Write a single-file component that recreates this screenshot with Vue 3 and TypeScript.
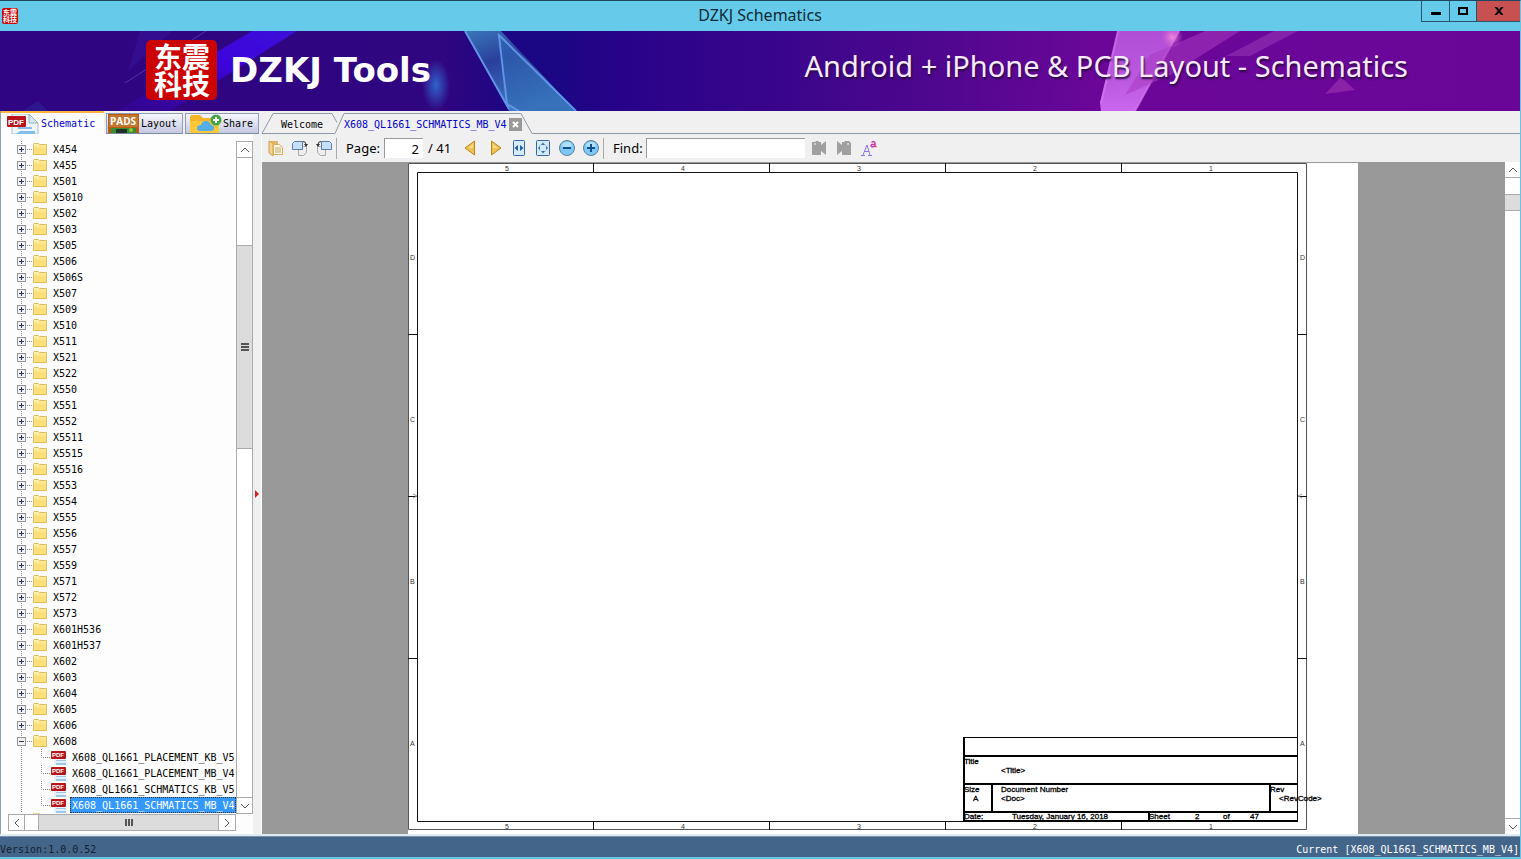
<script setup lang="ts">
import { ref } from 'vue'

const folders: string[] = [
  'X454', 'X455', 'X501', 'X5010', 'X502', 'X503', 'X505', 'X506', 'X506S', 'X507',
  'X509', 'X510', 'X511', 'X521', 'X522', 'X550', 'X551', 'X552', 'X5511', 'X5515',
  'X5516', 'X553', 'X554', 'X555', 'X556', 'X557', 'X559', 'X571', 'X572', 'X573',
  'X601H536', 'X601H537', 'X602', 'X603', 'X604', 'X605', 'X606', 'X608',
]
const openFolder = ref('X608')
const files: string[] = [
  'X608_QL1661_PLACEMENT_KB_V5',
  'X608_QL1661_PLACEMENT_MB_V4',
  'X608_QL1661_SCHMATICS_KB_V5',
  'X608_QL1661_SCHMATICS_MB_V4',
]
const selected = ref('X608_QL1661_SCHMATICS_MB_V4')
const pageNo = ref('2')
const findText = ref('')
const columns = [
  { label: '5', x: 97 }, { label: '4', x: 273 }, { label: '3', x: 449 },
  { label: '2', x: 625 }, { label: '1', x: 801 },
]
const rows = [
  { label: 'D', y: 97 }, { label: 'C', y: 259 }, { label: 'B', y: 421 }, { label: 'A', y: 583 },
]
</script>

<template>
  <div class="window">
    <header class="titlebar">
      <span class="seal seal-small" aria-hidden="true">东震科技</span>
      <h1>DZKJ Schematics</h1>
      <div class="win-buttons">
        <button class="min" aria-label="Minimize"><svg width="12" height="12"><path d="M1 7h10v3H1z" /></svg></button>
        <button class="max" aria-label="Maximize"><svg width="12" height="12"><path fill-rule="evenodd" d="M1 2h10v8H1zM3 4v4h6V4z" /></svg></button>
        <button class="close" aria-label="Close"><svg width="12" height="12"><path d="M1.500 2H4l2 2.500L8 2h2.500L7.300 6l3.200 4H8L6 7.500 4 10H1.500l3.200-4z" /></svg></button>
      </div>
    </header>

    <div class="banner">
      <svg class="banner-art" viewBox="0 0 1520 80" preserveAspectRatio="none" aria-hidden="true">
        <defs>
          <linearGradient id="bg" x1="0" x2="1">
            <stop offset="0" stop-color="#300583" /><stop offset="0.29" stop-color="#300580" />
            <stop offset="0.34" stop-color="#1b0783" /><stop offset="0.37" stop-color="#1b0783" />
            <stop offset="0.41" stop-color="#28038a" /><stop offset="0.5" stop-color="#37058a" />
            <stop offset="0.6" stop-color="#4b078e" /><stop offset="0.69" stop-color="#620795" />
            <stop offset="0.72" stop-color="#6b0699" /><stop offset="1" stop-color="#690698" />
          </linearGradient>
          <linearGradient id="beam" x1="1" y1="0" x2="0" y2="1">
            <stop offset="0" stop-color="#3d0fd8" /><stop offset="0.4" stop-color="#3c04dc" />
            <stop offset="1" stop-color="#3a06aa" stop-opacity="0.3" />
          </linearGradient>
          <linearGradient id="shard" x1="0" y1="0" x2="0.5" y2="1">
            <stop offset="0" stop-color="#3a78b8" /><stop offset="0.4" stop-color="#2a3f9c" />
            <stop offset="1" stop-color="#3f7fc4" />
          </linearGradient>
          <linearGradient id="pink" x1="0" y1="0" x2="0" y2="1">
            <stop offset="0" stop-color="#b04fd6" /><stop offset="0.6" stop-color="#bb58e0" />
            <stop offset="1" stop-color="#c968ee" />
          </linearGradient>
          <radialGradient id="glow"><stop offset="0" stop-color="#2f63c8" /><stop offset="1" stop-color="#2f63c8" stop-opacity="0" /></radialGradient>
          <radialGradient id="flare"><stop offset="0" stop-color="#f088dc" /><stop offset="1" stop-color="#d860d0" stop-opacity="0" /></radialGradient>
        </defs>
        <rect width="1520" height="80" fill="url(#bg)" />
        <path d="M140 0h32L128 40z" fill="#38149a" opacity="0.5" />
        <path d="M206 0 125 52" stroke="#5d49b5" opacity="0.7" />
        <path d="M252 0h45L170 80h-52z" fill="url(#beam)" />
        <path d="M38 70l10 10H22z" fill="#2a2a99" opacity="0.5" />
        <ellipse cx="436" cy="54" rx="14" ry="26" fill="url(#glow)" />
        <path d="M465 0h36l75 80H509z" fill="url(#shard)" />
        <path d="M500 5l8 65 10 10h58z" fill="#3168b4" opacity="0.6" />
        <path d="M465 0 509 78M498 3 576 80M499 5l8 68 12 7" fill="none" stroke="#6193e6" stroke-width="2" />
        <path d="M1118 0h61l-44 80h-34l-1-8z" fill="url(#pink)" />
        <path d="M1118 0 1101 72M1179 0l-44 80" stroke="#d47bee" stroke-width="2" opacity="0.7" />
        <path d="M1205 0h35l-70 44-45 20 25-40z" fill="#a73bc0" opacity="0.55" />
        <path d="M1274 0h24l-48 25h-24z" fill="#8e2fb0" opacity="0.7" />
        <path d="M1341 46l14 13-30 4z" fill="#8a22a8" />
        <circle cx="1172" cy="6" r="11" fill="url(#flare)" />
      </svg>
      <span class="seal" aria-hidden="true">东震科技</span>
      <strong class="brand">DZKJ Tools</strong>
      <span class="slogan">Android + iPhone &amp; PCB Layout - Schematics</span>
    </div>

    <div class="body">
      <aside class="sidebar">
        <nav class="side-tabs">
          <button class="side-tab active">
            <svg width="32" height="20" viewBox="0 0 32 20" aria-hidden="true">
              <path d="M5 0h17l9 9v11H5z" fill="#eef5fb" stroke="#a9bfd0" />
              <path d="M22 0v9h9z" fill="#d9e6ef" stroke="#8fb2c4" />
              <path d="M11 13h14v2H11zM13 17h15v3H9z" fill="#86bde8" />
              <rect x="0" y="2" width="19" height="11" rx="1" fill="#b9151b" />
              <text x="9" y="11" class="pdf-text" text-anchor="middle">PDF</text>
            </svg>
            <span>Schematic</span>
          </button>
          <button class="side-tab layout">
            <svg width="31" height="19" viewBox="0 0 31 19" aria-hidden="true">
              <rect width="31" height="19" fill="#b95b12" /><rect x="1" y="1" width="29" height="12" fill="#c5762e" />
              <path d="M3 19v-5h25v5z" fill="#3a8d33" /><path d="M8 19v-4h11v4z" fill="#1f3329" /><circle cx="23" cy="16" r="2" fill="#8ec641" />
              <text x="15" y="11" class="pads-text" text-anchor="middle">PADS</text>
            </svg>
            <span>Layout</span>
          </button>
          <button class="side-tab share">
            <svg width="32" height="19" viewBox="0 0 32 19" aria-hidden="true">
              <path d="M0 19V3q0-2 2-2h8l3 3h14q2 0 2 2v13z" fill="#f4b528" /><path d="M0 19V9l2-2h25l2 2v10z" fill="#fbc93a" />
              <path d="M10 17q-3 0-3-3t4-3q1-4 5-4t5 4q3 0 3 3t-3 3z" fill="#55aee8" />
              <circle cx="26" cy="6" r="5.500" fill="#3fa845" /><path d="M25 3h2v2h2v2h-2v2h-2V7h-2V5h2z" fill="#fff" />
            </svg>
            <span>Share</span>
          </button>
        </nav>
        <div class="side-main">
          <div class="tree-box">
            <div class="tree-area">
              <ul class="tree">
                <li v-for="name in folders" :key="name" class="branch">
                  <button class="node" @click="openFolder = openFolder === name ? '' : name">
                    <svg class="toggle" width="31" height="16" viewBox="0 0 31 16" aria-hidden="true">
                      <path d="M4.500 0v16M10 8.500h6" stroke="#888" stroke-dasharray="1 1" />
                      <rect x="0.500" y="4.500" width="8" height="8" fill="#f2f2f2" stroke="#969696" />
                      <path d="M2 8.500h5" stroke="#24365e" />
                      <path v-if="openFolder !== name" d="M4.500 6v5" stroke="#24365e" />
                      <path d="M16.500 3.500q0-1 1-1h4l1 1h7v10h-13z" fill="#fbe88f" stroke="#dfbe5b" />
                      <path d="M17 7h12v6H17z" fill="#fbdf7c" /><path d="M17 4h5" stroke="#fff8ce" />
                    </svg>
                    <span>{{ name }}</span>
                  </button>
                  <ul v-if="openFolder === name" class="children">
                    <li v-for="f in files" :key="f">
                      <button class="leaf" @click="selected = f">
                        <svg width="50" height="16" viewBox="0 0 50 16" aria-hidden="true">
                          <path d="M4.500 0v16" stroke="#888" stroke-dasharray="1 1" />
                          <path d="M24.500 0v8.500H34" fill="none" stroke="#888" stroke-dasharray="1 1" />
                          <path d="M37 2h8l4 4v10H37z" fill="#e6f1fa" /><path d="M39 11h10v1H39zM39 14h10v2H39z" fill="#9dc7e8" />
                          <rect x="34" y="2" width="15" height="8" rx="1" fill="#b9151b" />
                          <text x="41" y="8" class="icon-text" text-anchor="middle">PDF</text>
                        </svg>
                        <span :class="{ selected: selected === f }">{{ f }}</span>
                      </button>
                    </li>
                  </ul>
                </li>
                <li class="branch next"><span class="folder-top"></span></li>
              </ul>
              <div class="vbar">
                <button aria-label="Scroll up"><svg width="10" height="8"><path d="M1 6l4-4 4 4" /></svg></button>
                <span class="thumb"><i></i><i></i><i></i></span>
                <button aria-label="Scroll down"><svg width="10" height="8"><path d="M1 2l4 4 4-4" /></svg></button>
              </div>
            </div>
            <div class="hbar">
              <button aria-label="Scroll left"><svg width="8" height="10"><path d="M6 1L2 5l4 4" /></svg></button>
              <span class="hthumb"><i></i><i></i><i></i></span>
              <button aria-label="Scroll right"><svg width="8" height="10"><path d="M2 1l4 4-4 4" /></svg></button>
            </div>
          </div>
          <div class="splitter"><svg width="6" height="10" aria-hidden="true"><path d="M1 1l4 4-4 4z" fill="#d51f1f" /></svg></div>
        </div>
      </aside>

      <main class="main">
        <nav class="doc-tabs">
          <button class="doc-tab welcome">
            <svg width="76" height="23" viewBox="0 0 76 23" aria-hidden="true"><path d="M0 22.500 11 2.500h59l5 9M0 22.500h73" /></svg>
            <span>Welcome</span>
          </button>
          <div class="doc-tab current">
            <svg width="198" height="23" viewBox="0 0 198 23" aria-hidden="true"><path d="M0 22.500 9 2.500h177l11 20" /></svg>
            <button class="doc-name">X608_QL1661_SCHMATICS_MB_V4</button>
            <button class="doc-close" aria-label="Close tab"><svg width="13" height="13"><path d="M4 4l5 5M9 4L4 9" stroke="#fff" stroke-width="2" /></svg></button>
          </div>
          <span class="tab-fill"></span>
        </nav>

        <div class="toolbar">
          <button class="tool" aria-label="Copy">
            <svg width="16" height="16" viewBox="0 0 16 16"><path d="M1 1h9v13H3L1 12z" fill="#e3b566" /><path d="M1 1l4 2v13l-4-3z" fill="#f4d28e" stroke="#d2a052" /><path d="M5.500 4.500h6l3 3v7h-9z" fill="#fffae6" stroke="#d9ac5a" /><path d="M7 8h6M7 10h6M7 12h6" stroke="#c6a563" /></svg>
          </button>
          <button class="tool" aria-label="Rotate right">
            <svg width="16" height="16" viewBox="0 0 16 16"><path d="M6.500 6.500h8v6l-3 3h-5z" fill="#eee" stroke="#aaa" /><path d="M.500 3.500l2-2h8v8H.500z" fill="#c8e0f7" stroke="#5b7da8" /><path d="M11 1.500q3 0 3 3" fill="none" stroke="#333" /><path d="M12 4h4l-2 3z" fill="#333" /></svg>
          </button>
          <button class="tool" aria-label="Rotate left">
            <svg width="16" height="16" viewBox="0 0 16 16"><path d="M1.500 6.500h8v9h-5l-3-3z" fill="#eee" stroke="#aaa" /><path d="M5.500 1.500h8l2 2v6h-10z" fill="#c8e0f7" stroke="#5b7da8" /><path d="M5 1.500q-3 0-3 3" fill="none" stroke="#333" /><path d="M0 4h4L2 7z" fill="#333" /></svg>
          </button>
          <span class="sep"></span>
          <label for="page">Page:</label>
          <input id="page" v-model="pageNo" class="page-input" type="text" />
          <span class="total">/ 41</span>
          <button class="tool prev" aria-label="Previous page">
            <svg width="12" height="16" viewBox="0 0 12 16"><path d="M10.500 1v14L1 8z" fill="#edc24e" stroke="#b98521" /><path d="M9 4v4H4z" fill="#f8dd8c" /></svg>
          </button>
          <button class="tool next-page" aria-label="Next page">
            <svg width="12" height="16" viewBox="0 0 12 16"><path d="M1.500 1v14L11 8z" fill="#edc24e" stroke="#b98521" /><path d="M3 4v4h5z" fill="#f8dd8c" /></svg>
          </button>
          <button class="tool" aria-label="Fit width">
            <svg width="16" height="16" viewBox="0 0 16 16"><rect x="2.500" y=".500" width="11" height="15" rx="1" fill="#d5eafb" stroke="#3567a6" /><path d="M7 5v6L3.500 8zM9 5v6l3.500-3z" fill="#285e9e" /></svg>
          </button>
          <button class="tool" aria-label="Fit page">
            <svg width="16" height="16" viewBox="0 0 16 16"><rect x="1.500" y=".500" width="13" height="15" rx="1" fill="#d5eafb" stroke="#3567a6" /><path d="M8 2.500L10 5H6zM8 13.500L10 11H6zM3 8l2-2v4zM13 8l-2-2v4z" fill="#285e9e" /><circle cx="8" cy="8" r="4" fill="none" stroke="#78a8d8" stroke-dasharray="1 2" /></svg>
          </button>
          <button class="tool" aria-label="Zoom out">
            <svg width="16" height="16" viewBox="0 0 16 16"><circle cx="8" cy="8" r="7.500" fill="#7fc8f5" stroke="#56819f" /><ellipse cx="8" cy="5" rx="5" ry="3" fill="#aedffb" /><path d="M4 7h8v2H4z" fill="#11508c" /></svg>
          </button>
          <button class="tool" aria-label="Zoom in">
            <svg width="16" height="16" viewBox="0 0 16 16"><circle cx="8" cy="8" r="7.500" fill="#7fc8f5" stroke="#56819f" /><ellipse cx="8" cy="5" rx="5" ry="3" fill="#aedffb" /><path d="M4 7h3V4h2v3h3v2H9v3H7V9H4z" fill="#11508c" /></svg>
          </button>
          <span class="sep"></span>
          <label for="find">Find:</label>
          <input id="find" v-model="findText" class="find-input" type="text" />
          <button class="tool wide" aria-label="Find previous">
            <svg width="16" height="16" viewBox="0 0 16 16"><path d="M1 2h3l1-1h2l1 1h2v3l5-4v14l-5-4v4H1z" fill="#a0a0a0" /><circle cx="4" cy="4" r="1" fill="#ddd" /></svg>
          </button>
          <button class="tool wide" aria-label="Find next">
            <svg width="16" height="16" viewBox="0 0 16 16"><path d="M1 1l5 4V2h2l1-1h4l2 2v12H6v-4l-5 4z" fill="#a0a0a0" /><circle cx="12" cy="4" r="1" fill="#ddd" /></svg>
          </button>
          <button class="tool wide" aria-label="Match case">
            <svg width="16" height="16" viewBox="0 0 16 16"><path d="M0 15.500h4M7 15.500h4M2 15 6 5l3 10M3 11.500h5" fill="none" stroke="#8b76e8" /><path d="M10.500 2.500q3-2 3.500.500V7M14 4.500q-4-.500-4 1.200 1 2.300 4 .300l1.500 1" fill="none" stroke="#c63da4" stroke-width="1.500" /></svg>
          </button>
        </div>

        <div class="viewer">
          <div class="canvas">
            <svg class="sheet" width="950" height="671" viewBox="0 0 950 671" role="img" aria-label="Schematic sheet 2">
              <rect width="950" height="671" fill="#fff" />
              <g fill="none" stroke="#111">
                <path d="M.500 666.500V.500h898v666z" stroke="#555" />
                <path d="M9.500 658.500V9.500h880v649z" />
                <path d="M185.500 0v9M361.500 0v9M537.500 0v9M713.500 0v9M185.500 659v8M361.500 659v8M537.500 659v8M713.500 659v8" />
                <path d="M0 171.500h9M0 333.500h9M0 495.500h9M890 171.500h9M890 333.500h9M890 495.500h9" />
                <path d="M5 331l4 2-4 2M894 331l-4 2 4 2" stroke="#999" />
              </g>
              <g class="zone">
                <template v-for="c in columns" :key="c.label">
                  <text :x="c.x" y="8">{{ c.label }}</text><text :x="c.x" y="666">{{ c.label }}</text>
                </template>
                <template v-for="r in rows" :key="r.label">
                  <text x="2" :y="r.y">{{ r.label }}</text><text x="892" :y="r.y">{{ r.label }}</text>
                </template>
              </g>
              <g fill="none" stroke="#000">
                <path d="M889.500 574.500h-334" /><path d="M556 574v84M555 593h335M555 621h335M555 649h335M584 621v28M862 621v28M741 649v9M555 658h335" stroke-width="2" />
              </g>
              <g class="block">
                <text x="556" y="601">Title</text><text x="593" y="610">&lt;Title&gt;</text>
                <text x="556" y="629">Size</text><text x="565" y="638">A</text>
                <text x="593" y="629">Document Number</text><text x="593" y="638">&lt;Doc&gt;</text>
                <text x="862" y="629">Rev</text><text x="871" y="638">&lt;RevCode&gt;</text>
                <text x="556" y="656">Date:</text><text x="604" y="656">Tuesday, January 16, 2018</text>
                <text x="741" y="656">Sheet</text><text x="787" y="656">2</text><text x="815" y="656">of</text><text x="842" y="656">47</text>
              </g>
            </svg>
          </div>
          <div class="view-bar">
            <button aria-label="Previous"><svg width="10" height="8"><path d="M1 6l4-4 4 4" /></svg></button>
            <span class="view-thumb"></span>
            <button aria-label="Next"><svg width="10" height="8"><path d="M1 2l4 4 4-4" /></svg></button>
          </div>
        </div>
      </main>
    </div>

    <footer class="status">
      <span>Version:1.0.0.52</span>
      <span class="doc">Current [{{ selected }}]</span>
    </footer>
  </div>
</template>

<style>
body { overflow: hidden; }
</style>

<style scoped>
* { box-sizing: border-box; }
button { margin: 0; padding: 0; border: 0; background: none; color: inherit; font: inherit; display: flex; align-items: center; justify-content: center; }
ul { list-style: none; margin: 0; padding: 0; }
svg { display: block; flex: none; }
.window { height: 100vh; display: flex; flex-direction: column; overflow: hidden; border-top: 1px solid #1d4560; border-bottom: 2px solid #66c5e6; border-right: 1px solid #66c5e6; background: #f0f0f0; color: #000; font: 10px/16px "DejaVu Sans Mono", monospace; }

.titlebar { flex: none; position: relative; height: 30px; display: flex; align-items: center; justify-content: space-between; padding-left: 2px; background: #66caea; }
.titlebar h1 { position: absolute; inset: 0; margin: 0; text-align: center; font: 16px/28px "Noto Sans", sans-serif; color: #0e2b38; }
.win-buttons { position: relative; display: flex; align-self: flex-start; height: 21px; margin-right: -1px; border: 1px solid #28556a; border-top: 0; border-right: 0; }
.win-buttons button + button { border-left: 1px solid #28556a; }
.min { width: 27px; }
.max { width: 27px; }
.win-buttons .close { width: 45px; background: #c75050; }

.seal { position: relative; width: 71px; height: 60px; padding: 3px 6px 3px 7px; border-radius: 5px; background: #cc0303; color: #fff; font: 700 28px/27px "Noto Sans CJK SC", sans-serif; word-break: break-all; text-align: center; }
.seal-small { width: 16px; height: 16px; padding: 1px; border-radius: 2px; font-size: 7px; line-height: 7px; }
.banner { position: relative; flex: none; height: 80px; display: flex; align-items: center; padding: 0 112px 2px 146px; color: #fff; }
.banner-art { position: absolute; inset: 0; width: 100%; height: 100%; }
.brand { position: relative; margin-left: 13px; font: 700 34px/40px "DejaVu Sans", sans-serif; white-space: nowrap; }
.slogan { position: relative; margin-left: auto; padding-bottom: 8px; font: 29px/40px "Noto Sans", sans-serif; color: #f7eaff; text-shadow: 1px 2px 2px #2a0840; white-space: nowrap; }

.body { flex: 1; min-height: 0; display: flex; border-bottom: 2px solid #dfeaf2; }
.sidebar { flex: none; width: 262px; display: flex; flex-direction: column; border-left: 1px solid #8f9fae; background: #fdfdfd; }
.side-tabs { flex: none; height: 23px; display: flex; align-items: flex-end; gap: 2px; background: #f0f0f0; }
.side-tab { flex: none; height: 21px; justify-content: flex-start; border: 1px solid #8e9cb8; border-bottom-color: #7b8ba0; background: linear-gradient(#f7f7fd, #c5c9e2); line-height: 20px; white-space: nowrap; overflow: hidden; }
.side-tab span { padding-top: 1px; }
.side-tab.active { height: 23px; width: 103px; padding-left: 6px; gap: 2px; border: 0; border-top: 2px solid #fcb53f; background: #fdfdfd; color: #0000c8; }
.layout { width: 77px; padding-left: 1px; gap: 2px; }
.share { width: 74px; padding-left: 4px; gap: 1px; }
.icon-text { font: 700 6px "Liberation Sans", sans-serif; fill: #fff; }
.pdf-text { font: 700 8px "Liberation Sans", sans-serif; fill: #fff; }
.pads-text { font: 700 10px "Open Sans", sans-serif; fill: #fff; }
.side-main { flex: 1; min-height: 0; display: flex; padding-top: 7px; }
.tree-box { flex: 1; min-width: 0; margin: 0 0 3px 7px; display: flex; flex-direction: column; }
.tree-area { flex: 1; min-height: 0; display: flex; }
.tree { flex: 1; min-width: 0; overflow: hidden; padding-left: 9px; }
.node, .leaf { height: 16px; width: 100%; justify-content: flex-start; white-space: nowrap; }
.node { gap: 5px; }
.node span { padding-top: 2px; }
.leaf { gap: 3px; }
.leaf span { padding: 2px 0 0 1px; line-height: 12px; border: 1px dotted transparent; }
.leaf .selected { background: #3399ff; color: #fff; border-color: #333; }
.next { height: 2px; padding-left: 16px; }
.folder-top { display: block; width: 7px; height: 2px; background: #ecd58a; }

.vbar { flex: none; width: 17px; display: flex; flex-direction: column; border: 1px solid #aaa; background: #fff; }
.vbar button, .view-bar button { flex: none; height: 16px; border-bottom: 1px solid #aaa; }
.vbar button:last-child, .view-bar button:last-child { border-bottom: 0; border-top: 1px solid #aaa; margin-top: auto; }
.vbar path, .hbar path, .view-bar path { fill: none; stroke: #555; stroke-width: 1; }
.thumb { height: 204px; margin-top: 87px; display: flex; flex-direction: column; align-items: center; justify-content: center; gap: 1px; background: #dcdcdc; border: solid #aaa; border-width: 1px 0; }
.thumb i { width: 8px; height: 2px; background: #555; }
.hbar { flex: none; height: 17px; margin-right: 17px; display: flex; border: 1px solid #aaa; background: #fff; }
.hbar button { flex: none; width: 16px; border-right: 1px solid #aaa; }
.hbar button:last-child { border-right: 0; }
.hthumb { flex: 1; margin-left: 13px; display: flex; align-items: center; justify-content: center; gap: 1px; background: #dcdcdc; border: solid #aaa; border-width: 0 1px; }
.hthumb i { width: 2px; height: 7px; background: #555; }
.splitter { flex: none; width: 9px; margin-top: -7px; display: flex; align-items: center; padding: 20px 0 0 1px; background: #eff1f1; border-right: 1px solid #fff; }

.main { flex: 1; min-width: 0; display: flex; flex-direction: column; }
.doc-tabs { flex: none; height: 23px; display: flex; }
.doc-tab { position: relative; flex: none; height: 23px; display: flex; align-items: center; justify-content: flex-start; padding-top: 4px; }
.doc-tab > svg { position: absolute; inset: 0; fill: none; stroke: #8d9aa8; }
.doc-tab.welcome { width: 73px; padding-left: 19px; }
.doc-tab.welcome span { position: relative; }
.doc-tab.current { width: 197px; padding-left: 9px; gap: 2px; color: #0000c8; }
.doc-name, .doc-close { position: relative; }
.doc-close { width: 13px; height: 13px; background: #999; }
.tab-fill { flex: 1; border-bottom: 1px solid #8d9aa8; }

.toolbar { flex: none; height: 28px; display: flex; align-items: center; padding-left: 6px; font: 13px/20px "Noto Sans", sans-serif; }
.tool { width: 16px; height: 16px; margin-right: 8px; }
.tool.wide { margin-right: 9px; }
.tool.prev { width: 12px; margin-right: 14px; }
.tool.next-page { width: 12px; margin-right: 9px; }
.sep { width: 1px; height: 21px; background: #aaa; margin: 0 9px 0 -4px; }
.toolbar label { width: 38px; white-space: nowrap; }
.toolbar label[for="find"] { width: 33px; }
.toolbar input { height: 20px; margin: 0; padding: 0 4px; border: 0; border-top: 1px solid #999; border-left: 1px solid #999; border-radius: 0; background: #fff; font: inherit; outline: 0; }
.page-input { width: 39px; text-align: right; }
.toolbar .find-input { width: 159px; margin-right: 6px; }
.total { width: 36px; margin-left: 5px; white-space: nowrap; }

.viewer { flex: 1; min-height: 0; display: flex; }
.canvas { flex: 1; min-width: 0; overflow: hidden; display: flex; justify-content: center; align-items: flex-start; padding: 1px 1px 0 0; background: #999; }
.zone { font: 7px "Liberation Sans", sans-serif; fill: #333; }
.block { font: 8px "Liberation Sans", sans-serif; fill: #000; stroke: #000; stroke-width: 0.300; }
.view-bar { flex: none; width: 15px; display: flex; flex-direction: column; background: #fff; }
.view-thumb { flex: none; height: 17px; margin-top: 16px; background: #dcdcdc; border: solid #aaa; border-width: 1px 0; }

.status { flex: none; height: 21px; display: flex; justify-content: space-between; padding: 5px 1px 0 0; border-top: 1px solid #7791a6; background: #43658a; color: #14202e; line-height: 15px; }
.status .doc { color: #fff; }
</style>
